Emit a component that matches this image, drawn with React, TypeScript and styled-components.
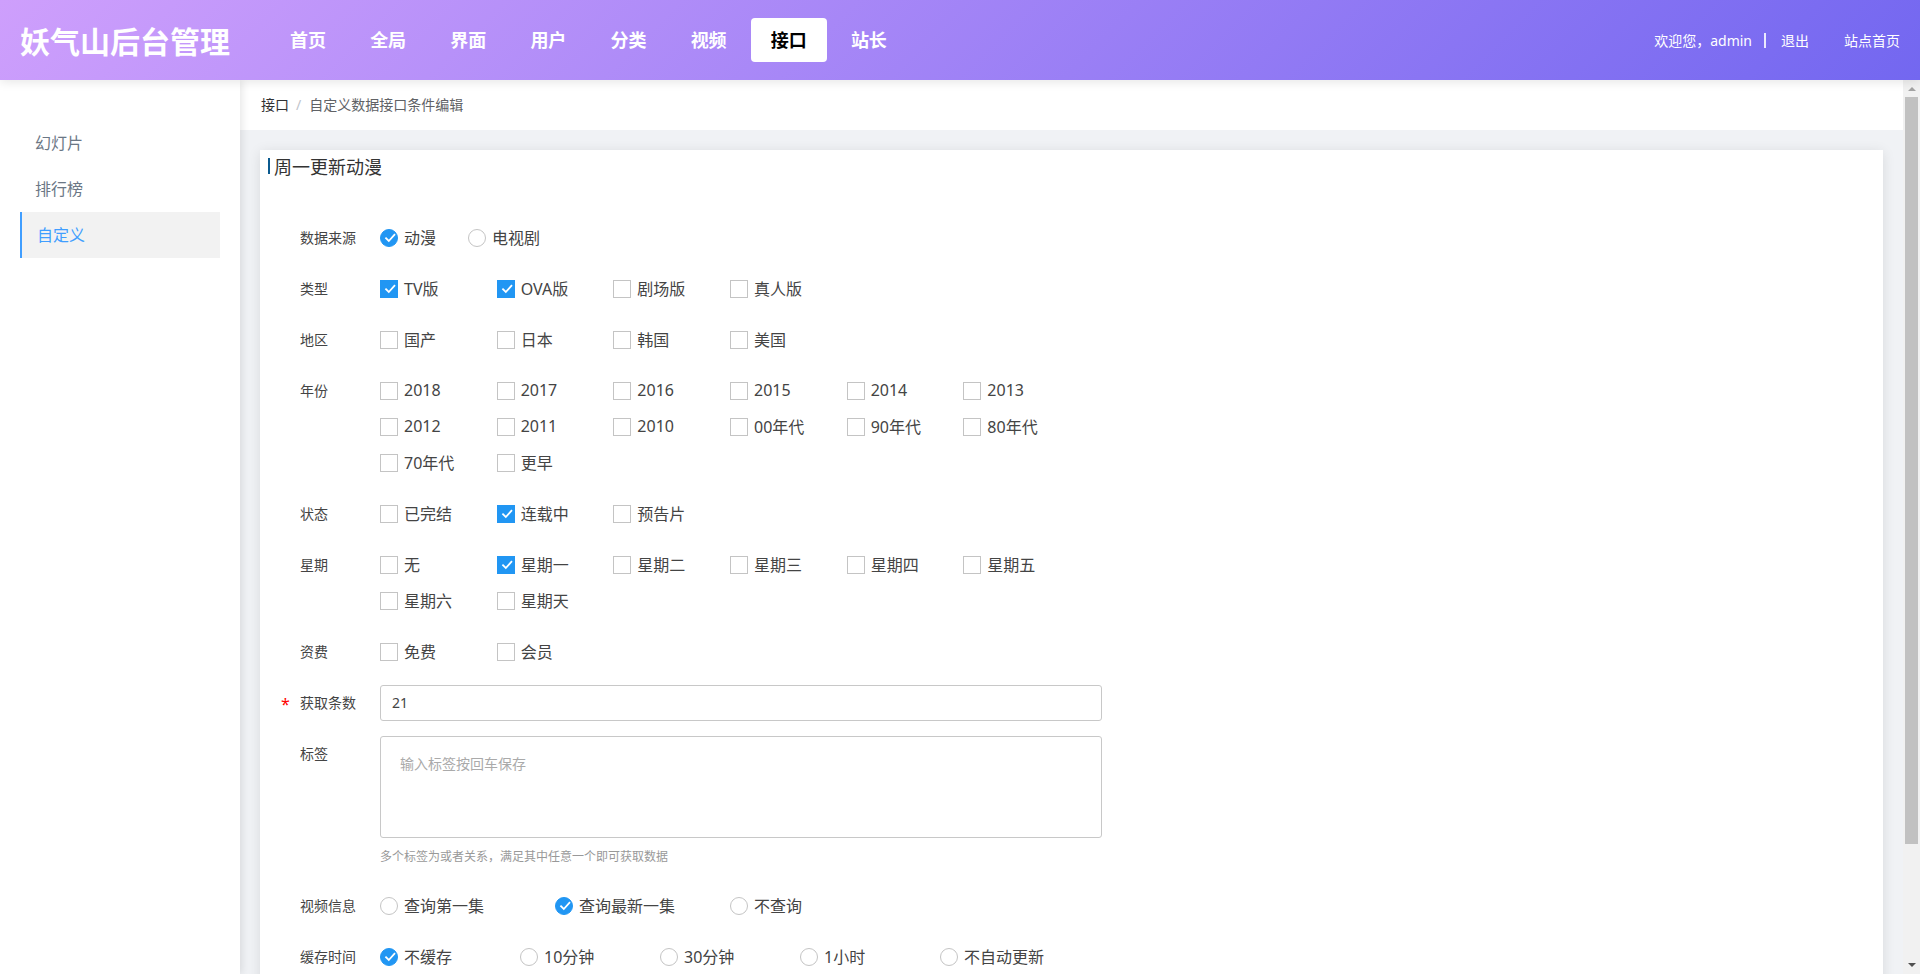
import React from "react";
import styled, { createGlobalStyle } from "styled-components";

const fontStack = `"Noto Sans", "Noto Sans CJK SC", sans-serif`;

const GlobalStyle = createGlobalStyle`
  html, body {
    margin: 0;
    height: 100%;
    overflow: hidden;
    font-family: ${fontStack};
  }
  * {
    box-sizing: border-box;
  }
`;

const navItems = ["首页", "全局", "界面", "用户", "分类", "视频", "接口", "站长"];
const sideItems = ["幻灯片", "排行榜", "自定义"];

const CheckMark = () => (
  <CheckSvg width="18" height="18" viewBox="0 0 18 18" fill="none">
    <path d="M5.4 8.6 L8.8 12 L15 5.2" stroke="#fff" strokeWidth="1.8" />
  </CheckSvg>
);

type Option = { text: string; on?: boolean };

const Check = ({ text, on }: Option) => (
  <OptionLabel>
    <CheckBox $on={on}>{on && <CheckMark />}</CheckBox>
    <OptionText>{text}</OptionText>
  </OptionLabel>
);

const Radio = ({ text, on }: Option) => (
  <OptionLabel>
    <RadioDot $on={on}>{on && <CheckMark />}</RadioDot>
    <OptionText>{text}</OptionText>
  </OptionLabel>
);

const opts = (names: string[], checked: string[] = []): Option[] =>
  names.map((text) => ({ text, on: checked.includes(text) }));

const checkRows: { label: string; options: Option[] }[] = [
  { label: "类型", options: opts(["TV版", "OVA版", "剧场版", "真人版"], ["TV版", "OVA版"]) },
  { label: "地区", options: opts(["国产", "日本", "韩国", "美国"]) },
  {
    label: "年份",
    options: opts([
      "2018", "2017", "2016", "2015", "2014", "2013",
      "2012", "2011", "2010", "00年代", "90年代", "80年代",
      "70年代", "更早",
    ]),
  },
  { label: "状态", options: opts(["已完结", "连载中", "预告片"], ["连载中"]) },
  {
    label: "星期",
    options: opts(
      ["无", "星期一", "星期二", "星期三", "星期四", "星期五", "星期六", "星期天"],
      ["星期一"]
    ),
  },
  { label: "资费", options: opts(["免费", "会员"]) },
];

export default function App() {
  return (
    <Page>
      <GlobalStyle />
      <Header>
        <Logo>妖气山后台管理</Logo>
        <Nav>
          {navItems.map((item) => (
            <NavItem key={item} $active={item === "接口"}>
              {item}
            </NavItem>
          ))}
        </Nav>
        <UserBar>
          <span>欢迎您，admin</span>
          <Divider />
          <span>退出</span>
          <HomeLink>站点首页</HomeLink>
        </UserBar>
      </Header>
      <Body>
        <Sidebar>
          {sideItems.map((item) => (
            <SideItem key={item} $active={item === "自定义"}>
              {item}
            </SideItem>
          ))}
        </Sidebar>
        <Main>
          <Breadcrumb>
            <CrumbRoot>接口</CrumbRoot>
            <CrumbSep>/</CrumbSep>
            <span>自定义数据接口条件编辑</span>
          </Breadcrumb>
          <Content>
            <Card>
              <CardTitle>周一更新动漫</CardTitle>
              <Form>
                <FormRow>
                  <Label>数据来源</Label>
                  <InlineOptions>
                    <Radio text="动漫" on />
                    <Radio text="电视剧" />
                  </InlineOptions>
                </FormRow>
                {checkRows.map((row) => (
                  <FormRow key={row.label}>
                    <Label>{row.label}</Label>
                    <OptionGrid $cols={6}>
                      {row.options.map((o) => (
                        <Check key={o.text} {...o} />
                      ))}
                    </OptionGrid>
                  </FormRow>
                ))}
                <FormRow>
                  <Label $required>获取条数</Label>
                  <TextInput defaultValue="21" />
                </FormRow>
                <FormRow $tight>
                  <Label>标签</Label>
                  <TextArea placeholder="输入标签按回车保存" />
                </FormRow>
                <Help>多个标签为或者关系，满足其中任意一个即可获取数据</Help>
                <FormRow>
                  <Label>视频信息</Label>
                  <OptionGrid $cols={4}>
                    <Radio text="查询第一集" />
                    <Radio text="查询最新一集" on />
                    <Radio text="不查询" />
                  </OptionGrid>
                </FormRow>
                <FormRow>
                  <Label>缓存时间</Label>
                  <OptionGrid $cols={5}>
                    <Radio text="不缓存" on />
                    <Radio text="10分钟" />
                    <Radio text="30分钟" />
                    <Radio text="1小时" />
                    <Radio text="不自动更新" />
                  </OptionGrid>
                </FormRow>
              </Form>
            </Card>
          </Content>
        </Main>
        <ScrollRail>
          <ArrowUp />
          <ScrollThumb />
          <ArrowDown />
        </ScrollRail>
      </Body>
    </Page>
  );
}

const Page = styled.div`
  height: 100vh;
  display: flex;
  flex-direction: column;
`;

const Header = styled.header`
  z-index: 2;
  flex: none;
  height: 80px;
  padding: 0 20px;
  display: flex;
  align-items: center;
  color: #fff;
  background: linear-gradient(135deg, #ce9ffc, #7367f0);
  box-shadow: 0 2px 10px rgba(0, 0, 0, 0.1);
`;

const Logo = styled.div`
  width: 250px;
  font-size: 30px;
  font-weight: 700;
  white-space: nowrap;
`;

const Nav = styled.nav`
  display: flex;
  gap: 4.14px;
`;

const NavItem = styled.a<{ $active?: boolean }>`
  width: 76px;
  height: 44px;
  line-height: 44px;
  text-align: center;
  font-size: 18px;
  font-weight: 700;
  border-radius: 4px;
  color: ${(p) => (p.$active ? "#000" : "#fff")};
  background: ${(p) => (p.$active ? "#fff" : "transparent")};
`;

const UserBar = styled.div`
  margin-left: auto;
  display: flex;
  align-items: center;
  font-size: 14px;
`;

const Divider = styled.i`
  width: 2px;
  height: 15px;
  margin: 0 15px 0 12px;
  background: #fff;
  opacity: 0.85;
`;

const HomeLink = styled.span`
  margin-left: 35px;
`;

const Body = styled.div`
  flex: 1;
  min-height: 0;
  display: flex;
`;

const Sidebar = styled.aside`
  z-index: 1;
  flex: none;
  width: 240px;
  padding: 40px 20px 0;
  background: #fff;
  box-shadow: 2px 0 8px rgba(0, 0, 0, 0.1);
`;

const SideItem = styled.div<{ $active?: boolean }>`
  height: 46px;
  line-height: 46px;
  font-size: 16px;
  padding-left: 15px;
  color: ${(p) => (p.$active ? "#409eff" : "#6b7785")};
  background: ${(p) => (p.$active ? "#f2f2f2" : "transparent")};
  border-left: ${(p) => (p.$active ? "2px solid #409eff" : "0")};
`;

const Main = styled.main`
  flex: 1;
  min-width: 0;
  overflow: hidden;
  background: #f0f2f5;
`;

const ScrollRail = styled.div`
  flex: none;
  width: 17px;
  display: flex;
  flex-direction: column;
  align-items: center;
  background: #f1f1f1;
`;

const ArrowUp = styled.div`
  flex: none;
  width: 0;
  height: 0;
  margin: 7px 0 6px;
  border-left: 4px solid transparent;
  border-right: 4px solid transparent;
  border-bottom: 4px solid #a3a3a3;
`;

const ScrollThumb = styled.div`
  flex: none;
  width: 13px;
  height: 747px;
  background: #c1c1c1;
`;

const ArrowDown = styled.div`
  flex: none;
  width: 0;
  height: 0;
  margin-top: auto;
  margin-bottom: 7px;
  border-left: 4px solid transparent;
  border-right: 4px solid transparent;
  border-top: 4px solid #505050;
`;

const Breadcrumb = styled.div`
  height: 50px;
  padding: 0 0 2px 21px;
  display: flex;
  align-items: center;
  font-size: 14px;
  color: #606266;
  background: #fff;
`;

const CrumbRoot = styled.span`
  color: #303133;
`;

const CrumbSep = styled.span`
  margin: 0 8px 0 7px;
  color: #c0c4cc;
`;

const Content = styled.div`
  padding: 20px;
`;

const Card = styled.section`
  height: 941px;
  padding: 8px;
  background: #fff;
  box-shadow: 0 2px 12px rgba(0, 0, 0, 0.1);
`;

const CardTitle = styled.h2`
  position: relative;
  margin: 0;
  height: 20px;
  line-height: 18px;
  padding-left: 6px;
  font-size: 18px;
  font-weight: 400;
  color: #333;

  &::before {
    content: "";
    position: absolute;
    left: 0;
    top: 0;
    width: 2px;
    height: 16px;
    background: #0b5a8f;
  }
`;

const Form = styled.div`
  padding: 42px 0 0 32px;
`;

const FormRow = styled.div<{ $tight?: boolean }>`
  display: flex;
  align-items: flex-start;
  margin-bottom: ${(p) => (p.$tight ? "0" : "15px")};
`;

const Label = styled.label<{ $required?: boolean }>`
  position: relative;
  flex: none;
  width: 80px;
  height: 36px;
  line-height: 36px;
  font-size: 14px;
  color: #444;

  &::before {
    content: ${(p) => (p.$required ? '"*"' : "none")};
    position: absolute;
    left: -19px;
    top: 1px;
    font-size: 16px;
    color: #f00;
  }
`;

const InlineOptions = styled.div`
  display: flex;
  gap: 32px;
`;

const OptionGrid = styled.div<{ $cols: number }>`
  width: 700px;
  display: grid;
  grid-template-columns: repeat(${(p) => p.$cols}, 1fr);
`;

const OptionLabel = styled.label`
  height: 36px;
  display: flex;
  align-items: center;
  gap: 6px;
  font-size: 16px;
  color: #444;
  white-space: nowrap;
`;

const OptionText = styled.span`
  margin-bottom: 2px;
`;

const CheckSvg = styled.svg`
  flex: none;
`;

const CheckBox = styled.span<{ $on?: boolean }>`
  flex: none;
  width: 18px;
  height: 18px;
  display: flex;
  align-items: center;
  justify-content: center;
  border: 1px solid ${(p) => (p.$on ? "#2196f3" : "#c4c4c4")};
  background: ${(p) => (p.$on ? "#2196f3" : "#fff")};
`;

const RadioDot = styled(CheckBox)`
  border-radius: 50%;
`;

const TextInput = styled.input`
  width: 722px;
  height: 36px;
  padding: 0 11px 2px;
  font: 14px ${fontStack};
  color: #444;
  outline: none;
  border: 1px solid #c8c8c8;
  border-radius: 3px;
`;

const TextArea = styled.textarea`
  width: 722px;
  height: 102px;
  padding: 17px 19px;
  font: 14px/20px ${fontStack};
  color: #444;
  outline: none;
  resize: none;
  border: 1px solid #c8c8c8;
  border-radius: 3px;

  &::placeholder {
    color: #aaa;
  }
`;

const Help = styled.div`
  height: 50px;
  padding: 10px 0 0 80px;
  font-size: 12px;
  line-height: 18px;
  color: #999;
`;
